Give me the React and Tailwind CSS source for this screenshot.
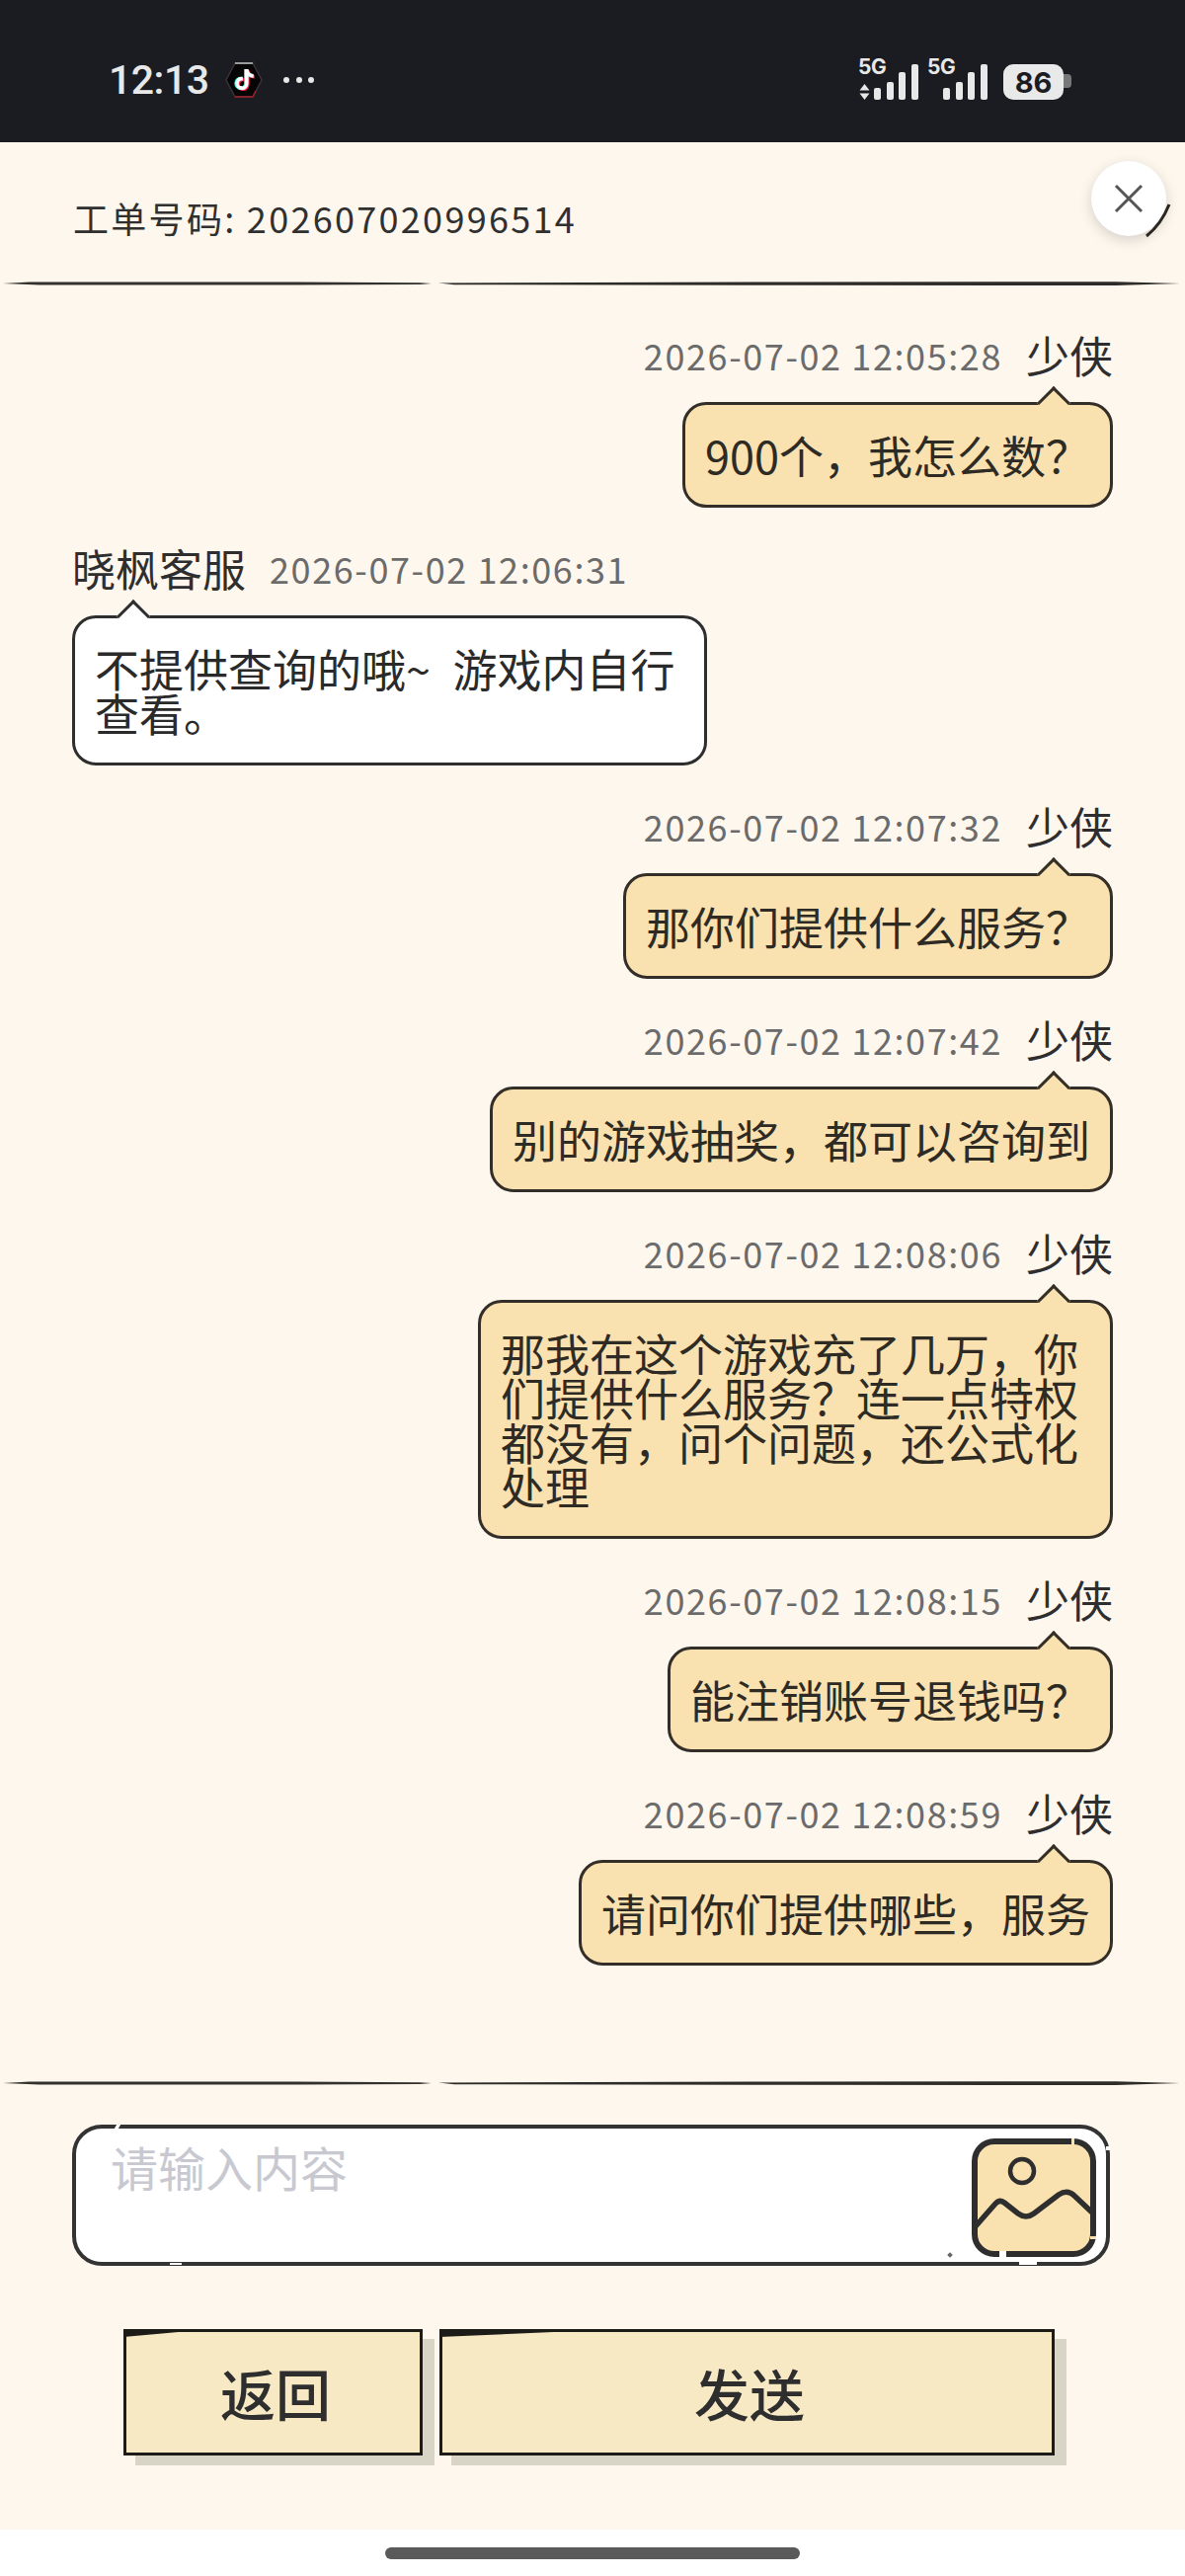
import React from 'react';
import { FaTiktok } from 'react-icons/fa6';

const font = { fontFamily: '"Noto Sans CJK SC", "Noto Sans", sans-serif' };

const messages = [
  { time: '2026-07-02 12:05:28', text: '900个，我怎么数？' },
  { time: '2026-07-02 12:06:31', text: '不提供查询的哦~\u2002游戏内自行查看。', staff: true },
  { time: '2026-07-02 12:07:32', text: '那你们提供什么服务？' },
  { time: '2026-07-02 12:07:42', text: '别的游戏抽奖，都可以咨询到' },
  { time: '2026-07-02 12:08:06', text: '那我在这个游戏充了几万，你们提供什么服务？连一点特权都没有，问个问题，还公式化处理' },
  { time: '2026-07-02 12:08:15', text: '能注销账号退钱吗？' },
  { time: '2026-07-02 12:08:59', text: '请问你们提供哪些，服务' },
];

// brush stroke under the header and above the input
const Divider = () => (
  <svg viewBox="0 0 1200 6" className="block h-[6px] w-full shrink-0">
    <path d="M3 3 L30 1.5 L300 1.6 L425 2.2 L437 3 L425 4 L300 4.4 L40 4.6 Z" fill="#33312d" />
    <path d="M444 2.4 L800 1.4 L1130 1.2 L1195 3 L1130 5 L800 4.8 L460 4.2 Z" fill="#2e2c28" />
  </svg>
);

const SignalBars = ({ arrows }) => (
  <div className="relative h-[40px] w-[62px]">
    <span className="absolute left-0 top-[-5px] text-[21px] font-bold leading-[24px] tracking-[-0.5px] text-[#e8e8e8]" style={{ fontFamily: 'Inter, sans-serif' }}>
      5G
    </span>
    {arrows && (
      <svg viewBox="0 0 11 16" className="absolute bottom-0 left-[1px] h-[16px] w-[11px]">
        <path d="M5.5 0 L10.5 6.5 H0.5 Z M0.5 9.5 H10.5 L5.5 16 Z" fill="#e8e8e8" />
      </svg>
    )}
    <div className="absolute bottom-0 left-[16px] flex items-end gap-[5.5px]">
      <div className="h-[12px] w-[7px] rounded-[2px] bg-[#e8e8e8]" />
      <div className="h-[18px] w-[7px] rounded-[2px] bg-[#e8e8e8]" />
      <div className="h-[28px] w-[7px] rounded-[2px] bg-[#e8e8e8]" />
      <div className="h-[36px] w-[7px] rounded-[2px] bg-[#e8e8e8]" />
    </div>
  </div>
);

const StatusBar = () => (
  <div className="flex h-[144px] shrink-0 items-center justify-between bg-[#1b1c21] pl-[110px] pr-[115px] pt-[18px]">
    <div className="flex items-center">
      <span className="w-[118px] text-[41px] font-medium leading-none tracking-[-0.5px] text-[#e8e8e8]" style={{ fontFamily: 'Roboto, sans-serif' }}>
        12:13
      </span>
      <div className="relative h-[36px] w-[38px]">
        <svg viewBox="0 0 38 36" className="absolute inset-0 h-full w-full">
          <polygon points="10,1 28,1 37,18 28,35 10,35 1,18" fill="#060506" stroke="#3a3236" strokeWidth="1.5" />
          <path d="M10 1 H28" fill="none" stroke="#9a9a9a" strokeWidth="2" />
          <path d="M10 35 H28 L31 29" fill="none" stroke="#a01f2c" strokeWidth="1.5" />
        </svg>
        <FaTiktok className="absolute left-[9.5px] top-[7.5px] text-[21px] text-[#ff2a50]" />
        <FaTiktok className="absolute left-[7.5px] top-[6.5px] text-[21px] text-[#25f4c0]" />
        <FaTiktok className="absolute left-[8.5px] top-[7px] text-[21px] text-white" />
      </div>
      <div className="ml-[21px] flex gap-[6.5px]">
        <div className="h-[6px] w-[6px] rounded-full bg-[#e8e8e8]" />
        <div className="h-[6px] w-[6px] rounded-full bg-[#e8e8e8]" />
        <div className="h-[6px] w-[6px] rounded-full bg-[#e8e8e8]" />
      </div>
    </div>
    <div className="flex items-end">
      <SignalBars arrows />
      <div className="w-[8px]" />
      <SignalBars />
      <div className="relative ml-[15px] h-[36px] w-[69px]">
        <div className="absolute right-0 top-[10px] h-[14px] w-[12px] rounded-r-[4px] bg-[#77787a]" />
        <div className="absolute left-0 top-0 flex h-[36px] w-[61px] items-center justify-center rounded-[10px] bg-[#e9e9e9] text-[29px] font-bold leading-none text-[#1b1c21]" style={{ fontFamily: 'Inter, sans-serif' }}>
          86
        </div>
      </div>
    </div>
  </div>
);

const Message = ({ time, text, staff }) => (
  <div className={`mb-[42px] flex flex-col ${staff ? 'items-start' : 'items-end'}`}>
    <div className={`flex h-[46px] items-center gap-[24px] pb-[9px] ${staff ? 'flex-row-reverse' : ''}`}>
      <span className="text-[36px] leading-none tracking-[1.6px] text-[#6b6b6b] proportional-nums">{time}</span>
      <span className="text-[44px] leading-none text-[#2e2e2e]">{staff ? '晓枫客服' : '少侠'}</span>
    </div>
    <div
      className={`relative mt-[21px] max-w-[643px] rounded-[24px] border-[3px] px-[20px] py-[28px] text-[45px] leading-[45px] ${
        staff ? 'border-[#2e2e2e] bg-white text-[#2a2a2a]' : 'border-[#332e27] bg-[#f9e1b0] text-[#2e2a24]'
      }`}
    >
      <div
        className={`absolute top-[-14px] h-[24px] w-[24px] rotate-45 border-l-[3px] border-t-[3px] ${
          staff ? 'left-[47px] border-[#2e2e2e] bg-white' : 'right-[45px] border-[#332e27] bg-[#f9e1b0]'
        }`}
      />
      <span className="relative">{text}</span>
    </div>
  </div>
);

const ImageIcon = () => (
  <svg viewBox="0 0 126 120" className="absolute right-[10px] top-[10px] h-[120px] w-[126px]">
    <rect x="3" y="3" width="120" height="114" rx="20" fill="#f9e1b0" stroke="#2e2e2e" strokeWidth="6" />
    <circle cx="51" cy="33" r="12" fill="none" stroke="#2e2e2e" strokeWidth="4.5" />
    <path d="M3 90 L24 66 Q28 61 33 65 L47 76 Q55 82 63 76 L88 57 Q97 51 104 58 L123 76" fill="none" stroke="#2e2e2e" strokeWidth="5.5" />
    <rect x="101" y="0" width="3" height="7" fill="#f9e1b0" />
    <rect x="120" y="99" width="6" height="3" fill="#f9e1b0" />
    <rect x="28" y="114" width="7" height="6" fill="white" />
  </svg>
);

const InputBox = () => (
  <div className="relative mx-[73px] mt-[39px] h-[143px] w-[1051px] shrink-0 rounded-[30px] border-[4px] border-[#333333] bg-white pl-[35px] pt-[8px] text-[48px] leading-[60px] text-[#c8c9d0]">
    请输入内容
    <ImageIcon />
    {/* nicks in the hand drawn outline */}
    <div className="absolute left-[40px] top-[-4px] h-[4px] w-[4px] -skew-x-[30deg] bg-white" />
    <div className="absolute bottom-[-3px] left-[95px] h-[2px] w-[12px] bg-white" />
    <div className="absolute bottom-[-3px] right-[70px] h-[3px] w-[18px] bg-white" />
    <div className="absolute right-[-4px] top-[18px] h-[4px] w-[4px] bg-white" />
    <div className="absolute bottom-[5px] right-[156px] h-[4px] w-[4px] rotate-45 bg-[#666666]" />
  </div>
);

const SketchButton = ({ label, width }) => (
  <button className={`relative flex h-[128px] items-center justify-center border-[3px] border-[#1c1b18] bg-[#f7e9c4] pl-[5px] text-[56px] font-medium leading-none text-[#2e2e2e] shadow-[12px_10px_0_#d8d5c6] ${width}`}>
    <svg viewBox="0 0 100 6" preserveAspectRatio="none" className="absolute left-[-3px] top-[-3px] h-[8px] w-[30%]">
      <polygon points="0,0 100,0 0,6" fill="#1c1b18" />
    </svg>
    {label}
  </button>
);

export default function App() {
  return (
    <div className="relative flex h-[2608px] w-[1200px] flex-col overflow-hidden bg-white" style={font}>
      <StatusBar />
      <div className="flex h-[2417px] shrink-0 flex-col bg-[#fef7ee]">
        <div className="h-[140px] shrink-0 pl-[74px] pt-[56px] text-[36px] leading-[40px] tracking-[2.3px] text-[#303030]">
          工单号码: 202607020996514
        </div>
        <Divider />
        <div className="h-[1816px] shrink-0 px-[73px] pt-[50px]">
          {messages.map((m) => (
            <Message key={m.time} {...m} />
          ))}
        </div>
        <Divider />
        <InputBox />
        <div className="ml-[125px] mt-[64px] flex gap-[17px]">
          <SketchButton label="返回" width="w-[303px]" />
          <SketchButton label="发送" width="w-[623px]" />
        </div>
      </div>
      <div className="flex flex-1 items-center justify-center">
        <div className="h-[12px] w-[420px] rounded-full bg-[#5a5a5a]" />
      </div>

      {/* floating close button */}
      <div className="absolute left-[1105px] top-[163px] flex h-[76px] w-[76px] items-center justify-center rounded-full bg-white shadow-[0_4px_14px_rgba(0,0,0,0.16)]">
        <svg viewBox="0 0 30 30" className="h-[30px] w-[30px]">
          <path d="M2 2 L28 28 M28 2 L2 28" stroke="#555555" strokeWidth="3" fill="none" />
        </svg>
      </div>
      <svg viewBox="0 0 28 36" className="absolute left-[1158px] top-[205px] h-[36px] w-[28px]">
        <path d="M26 2 Q18 22 3 34" stroke="#2a2620" strokeWidth="3" fill="none" />
      </svg>
    </div>
  );
}
